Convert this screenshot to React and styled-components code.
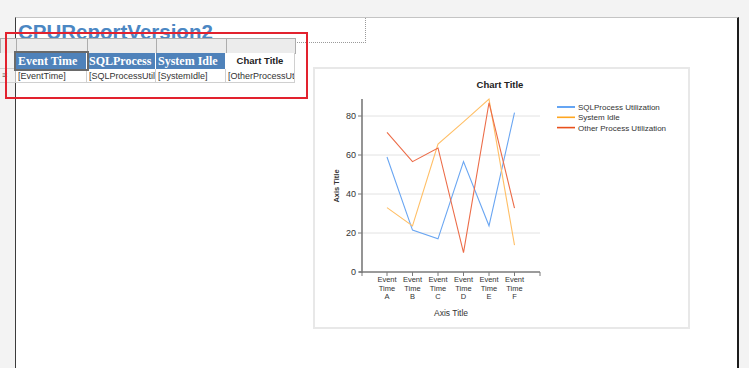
import styled, { createGlobalStyle } from "styled-components"

const GlobalStyle = createGlobalStyle`
  html, body {
    margin: 0;
    padding: 0;
    background: #f3f3f3;
    overflow: hidden;
  }
`

const columns = ["Event Time", "SQLProcess", "System Idle"]
const fields = ["[EventTime]", "[SQLProcessUtil", "[SystemIdle]", "[OtherProcessUt"]
const categories = ["A", "B", "C", "D", "E", "F"]
const catX = [387, 412.5, 438, 463.5, 489, 514.5]
const series = [
  { name: "SQLProcess Utilization", color: "#3f8ff0", line: "#6aa6f2", values: [59, 21.5, 17, 56.6, 23.7, 81.7] },
  { name: "System Idle", color: "#ffa621", line: "#ffbf66", values: [33, 23.6, 65.6, 77, 88.7, 13.8] },
  { name: "Other Process Utilization", color: "#e8501c", line: "#ec6c48", values: [71.6, 56.6, 63.6, 9.9, 86.8, 32.7] },
]
const yOf = (v) => 272 - v * 1.95

export default function App () {
  return (
    <Page>
      <GlobalStyle />
      <Surface>
        <TitleBox>
          <ReportTitle>CPUReportVersion2</ReportTitle>
        </TitleBox>
        <BodyRow>
          <Tablix>
            <Handle />
            <Handle />
            <Handle />
            <Handle />
            <Handle />
            <RowHandle />
            {columns.map((c, i) => (
              <HeaderCell key={c} selected={i === 0}>{c}</HeaderCell>
            ))}
            <PlainHeader>Chart Title</PlainHeader>
            <RowHandle>≡</RowHandle>
            {fields.map((f) => (
              <DataCell key={f}>{f}</DataCell>
            ))}
          </Tablix>
          <ChartPanel>
            <LineChart />
          </ChartPanel>
        </BodyRow>
      </Surface>
      <SelectionBox />
    </Page>
  )
}

function LineChart () {
  return (
    <svg width="373" height="258" viewBox="315 69 373 258" fontFamily="'Liberation Sans', Arial, sans-serif">
      <text x="500" y="88" textAnchor="middle" fontSize="9.5" fontWeight="bold" fill="#222">Chart Title</text>
      {[20, 40, 60, 80].map((v) => (
        <line key={v} x1="362" x2="540" y1={yOf(v)} y2={yOf(v)} stroke="#e2e2e2" strokeWidth="1" />
      ))}
      {[0, 20, 40, 60, 80].map((v) => (
        <g key={v}>
          <line x1="358" x2="362" y1={yOf(v)} y2={yOf(v)} stroke="#7a7a7a" strokeWidth="1" />
          <text x="356" y={yOf(v) + 3.2} textAnchor="end" fontSize="9" fill="#333">{v}</text>
        </g>
      ))}
      <line x1="362" x2="362" y1="99" y2="273" stroke="#7a7a7a" strokeWidth="1.6" />
      <line x1="359" x2="540" y1="272" y2="272" stroke="#7a7a7a" strokeWidth="1.6" />
      {[362, ...catX, 540].map((x) => (
        <line key={x} x1={x} x2={x} y1="272" y2="276" stroke="#7a7a7a" strokeWidth="1" />
      ))}
      {catX.map((x, i) => (
        <text key={x} x={x} y="282" textAnchor="middle" fontSize="7.5" fill="#333">
          <tspan x={x}>Event</tspan>
          <tspan x={x} dy="8.6">Time</tspan>
          <tspan x={x} dy="8.8">{categories[i]}</tspan>
        </text>
      ))}
      <text x="451" y="316" textAnchor="middle" fontSize="8.5" fill="#333">Axis Title</text>
      <text x="339" y="186" textAnchor="middle" fontSize="7.5" fontWeight="bold" fill="#333" transform="rotate(-90 339 186)">Axis Title</text>
      {series.map((s) => (
        <polyline
          key={s.name}
          points={s.values.map((v, i) => `${catX[i]},${yOf(v)}`).join(" ")}
          fill="none"
          stroke={s.line}
          strokeWidth="1.1"
        />
      ))}
      {series.map((s, i) => (
        <g key={s.name}>
          <line x1="557" x2="575" y1={107 + i * 10.3} y2={107 + i * 10.3} stroke={s.color} strokeWidth="1.6" />
          <text x="578" y={110 + i * 10.3} fontSize="8" fill="#333">{s.name}</text>
        </g>
      ))}
    </svg>
  )
}

const Page = styled.div`
  position: relative;
  width: 749px;
  height: 368px;
  overflow: hidden;
  font-family: 'Liberation Sans', Arial, sans-serif;
`

const Surface = styled.div`
  margin: 17px 0 0 15px;
  width: 721px;
  height: 360px;
  background: #ffffff;
  border-top: 1px solid #c4c4c4;
  border-left: 1px solid #3c3c3c;
  border-right: 2px solid #1c1c1c;
`

const TitleBox = styled.div`
  width: 350px;
  height: 25px;
  border-right: 1px dotted #9a9a9a;
  border-bottom: 1px dotted #9a9a9a;
  box-sizing: border-box;
  padding: 4px 0 0 2px;
`

const ReportTitle = styled.div`
  font-family: 'Liberation Sans', Arial, sans-serif;
  font-weight: bold;
  font-size: 20.5px;
  line-height: 20px;
  color: #4b87c3;
  white-space: nowrap;
`

const BodyRow = styled.div`
  display: flex;
  align-items: flex-start;
  margin: -5px 0 0 -16px;
`

const Tablix = styled.div`
  position: relative;
  display: grid;
  grid-template-columns: 16px 71px 69px 70px 69px;
  grid-template-rows: 15px 16px 14px;
  width: 295px;
`

const Handle = styled.div`
  background: #ececec;
  border: 1px solid #adadad;
  margin: 0 -1px -1px 0;
`

const RowHandle = styled.div`
  background: #f3f3f3;
  border-right: 1px solid #b8b8b8;
  border-bottom: 1px solid #d0d0d0;
  font-size: 9px;
  line-height: 13px;
  color: #666;
  padding-left: 2px;
`

const HeaderCell = styled.div`
  background: #4f82ba;
  color: #ffffff;
  font-family: 'Liberation Serif', 'Times New Roman', serif;
  font-weight: bold;
  font-size: 12px;
  line-height: 16px;
  padding-left: 2px;
  white-space: nowrap;
  overflow: ${(p) => (p.selected ? "visible" : "hidden")};
  box-shadow: ${(p) => (p.selected ? "0 0 0 2px #6a6a6a" : "none")};
  z-index: ${(p) => (p.selected ? 1 : 0)};
  border-right: 1px solid #ffffff;
`

const PlainHeader = styled.div`
  background: #ffffff;
  color: #222;
  font-weight: bold;
  font-size: 9.5px;
  line-height: 16px;
  text-align: center;
  border-right: 1px solid #d0d0d0;
`

const DataCell = styled.div`
  background: #ffffff;
  color: #333;
  font-size: 9px;
  line-height: 14px;
  padding-left: 2px;
  white-space: nowrap;
  overflow: hidden;
  border-right: 1px solid #d0d0d0;
  border-bottom: 1px solid #d0d0d0;
  box-sizing: border-box;
`

const ChartPanel = styled.div`
  margin: 29px 0 0 18px;
  width: 373px;
  height: 258px;
  background: #ffffff;
  border: 2px solid #e8e8e8;
  line-height: 0;
`

const SelectionBox = styled.div`
  position: absolute;
  left: 5px;
  top: 32px;
  width: 299px;
  height: 63px;
  border: 2px solid #e2222e;
  pointer-events: none;
`
